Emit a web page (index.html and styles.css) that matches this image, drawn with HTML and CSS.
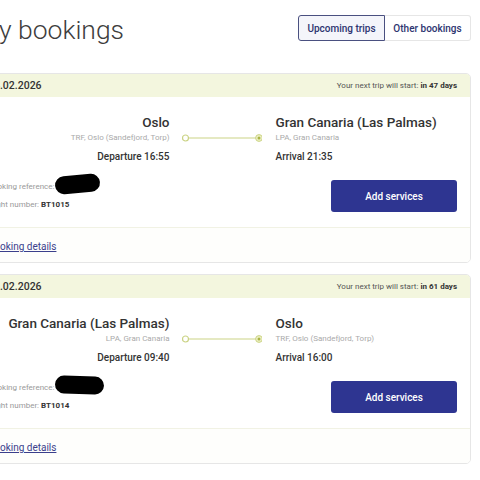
FILE: index.html
```html
<!DOCTYPE html>
<html lang="en">
<head>
<meta charset="utf-8">
<title>My bookings</title>
<link rel="stylesheet" href="styles.css">
</head>
<body>
<div class="page">
  <div class="top">
    <h1 class="title">My bookings</h1>
    <div class="tabs">
      <button class="tab active">Upcoming trips</button>
      <button class="tab">Other bookings</button>
    </div>
  </div>

  <div class="card">
    <div class="card-head">
      <span class="date">14.02.2026</span>
      <span class="next">Your next trip will start: <b>in 47 days</b></span>
    </div>
    <div class="card-body">
      <div class="route">
        <div class="stop from">
          <div class="city">Oslo</div>
          <div class="airport">TRF, Oslo (Sandefjord, Torp)</div>
          <div class="time">Departure 16:55</div>
        </div>
        <div class="line">
          <svg width="80" height="10" viewBox="0 0 80 10"><line x1="5" y1="5" x2="76" y2="5" stroke="#cbd385" stroke-width="1.2"/><circle cx="3.5" cy="5" r="3" fill="#fff" stroke="#cbd385" stroke-width="1.2"/><circle cx="77" cy="5" r="3.4" fill="#eef1c6" stroke="#cbd385" stroke-width="1"/><circle cx="77" cy="5" r="1.5" fill="#a9b444"/></svg>
        </div>
        <div class="stop to">
          <div class="city">Gran Canaria (Las Palmas)</div>
          <div class="airport">LPA, Gran Canaria</div>
          <div class="time">Arrival 21:35</div>
        </div>
      </div>
      <div class="info-row">
        <div class="info">
          <div class="ref">Booking reference: <span class="redact"></span></div>
          <div class="flight">Flight number: <b>BT1015</b></div>
        </div>
        <button class="add">Add services</button>
      </div>
    </div>
    <div class="card-foot"><a href="#" class="details">Booking details</a></div>
  </div>

  <div class="card">
    <div class="card-head">
      <span class="date">28.02.2026</span>
      <span class="next">Your next trip will start: <b>in 61 days</b></span>
    </div>
    <div class="card-body">
      <div class="route">
        <div class="stop from">
          <div class="city">Gran Canaria (Las Palmas)</div>
          <div class="airport">LPA, Gran Canaria</div>
          <div class="time">Departure 09:40</div>
        </div>
        <div class="line">
          <svg width="80" height="10" viewBox="0 0 80 10"><line x1="5" y1="5" x2="76" y2="5" stroke="#cbd385" stroke-width="1.2"/><circle cx="3.5" cy="5" r="3" fill="#fff" stroke="#cbd385" stroke-width="1.2"/><circle cx="77" cy="5" r="3.4" fill="#eef1c6" stroke="#cbd385" stroke-width="1"/><circle cx="77" cy="5" r="1.5" fill="#a9b444"/></svg>
        </div>
        <div class="stop to">
          <div class="city">Oslo</div>
          <div class="airport">TRF, Oslo (Sandefjord, Torp)</div>
          <div class="time">Arrival 16:00</div>
        </div>
      </div>
      <div class="info-row">
        <div class="info">
          <div class="ref">Booking reference: <span class="redact wide"></span></div>
          <div class="flight">Flight number: <b>BT1014</b></div>
        </div>
        <button class="add">Add services</button>
      </div>
    </div>
    <div class="card-foot"><a href="#" class="details">Booking details</a></div>
  </div>
</div>
</body>
</html>
```

FILE: styles.css
```css
html, body {
  margin: 0;
  padding: 0;
  background: #fff;
  overflow: hidden;
}
body {
  font-family: Roboto, "Liberation Sans", sans-serif;
  color: #333;
}
.page {
  margin-left: -26px;
  width: 497px;
}
.top {
  display: flex;
  justify-content: space-between;
  align-items: center;
  padding-top: 15px;
  height: 26px;
  margin-bottom: 32px;
}
.title {
  margin: 0 0 0 2px;
  font-size: 26.5px;
  font-weight: 300;
  line-height: 26px;
  color: #3d3d3d;
  position: relative;
  top: 2px;
}
.tabs {
  display: flex;
}
.tab {
  font-family: inherit;
  font-size: 10px;
  font-weight: 500;
  color: #2d3470;
  height: 26px;
  padding: 0;
  margin: 0;
  background: #fff;
  border: 1px solid #e6e6e6;
  border-left: none;
  border-radius: 0 3px 3px 0;
  width: 86px;
}
.tab.active {
  width: 87px;
  background: #f4f5fa;
  border: 1px solid #4a5080;
  border-radius: 3px 0 0 3px;
}
.card {
  border: 1px solid #e6e6e6;
  border-radius: 5px;
  overflow: hidden;
  margin-bottom: 11px;
}
.card-head {
  display: flex;
  justify-content: space-between;
  align-items: center;
  height: 23px;
  padding: 0 13px;
  background: #f3f6de;
}
.date {
  font-size: 10.5px;
  font-weight: 500;
  color: #333;
}
.next {
  font-size: 8px;
  color: #555;
}
.next b {
  font-weight: 700;
  color: #333;
}
.card-body {
  padding: 15px 13px 15px;
}
.route {
  display: grid;
  grid-template-columns: 1fr 78px 1fr;
  column-gap: 14px;
  align-items: start;
}
.stop.from {
  text-align: right;
}
.city {
  font-size: 13.5px;
  font-weight: 500;
  line-height: 20px;
  color: #333;
}
.airport {
  font-size: 8px;
  line-height: 12px;
  color: #aaa;
}
.time {
  margin-top: 6px;
  font-size: 10px;
  font-weight: 500;
  line-height: 14px;
  color: #333;
}
.line {
  padding-top: 21px;
  margin-left: -2px;
}
.line svg {
  display: block;
}
.info-row {
  display: flex;
  justify-content: space-between;
  align-items: center;
  margin-top: 16px;
}
.info {
  font-size: 8px;
  color: #999;
}
.ref {
  line-height: 12px;
  height: 12px;
}
.flight {
  margin-top: 6px;
  line-height: 12px;
}
.flight b {
  color: #333;
  font-weight: 700;
}
.redact {
  display: inline-block;
  width: 45px;
  height: 18px;
  background: #000;
  border-radius: 9px;
  vertical-align: middle;
  margin-left: -1px;
  margin-top: -6px;
  transform: rotate(-5deg);
}
.redact.wide {
  width: 49px;
  transform: rotate(2deg);
}
.add {
  width: 126px;
  height: 32px;
  margin: 0;
  border: none;
  border-radius: 3px;
  background: #2e3591;
  color: #fff;
  font-family: inherit;
  font-size: 10px;
  font-weight: 500;
}
.card-foot {
  border-top: 1px solid #f1f2e4;
  background: #fefefc;
  padding: 10px 13px 9px;
  line-height: 13px;
}
.details {
  font-size: 10px;
  color: #3b3f8c;
  text-decoration: underline;
}
```
